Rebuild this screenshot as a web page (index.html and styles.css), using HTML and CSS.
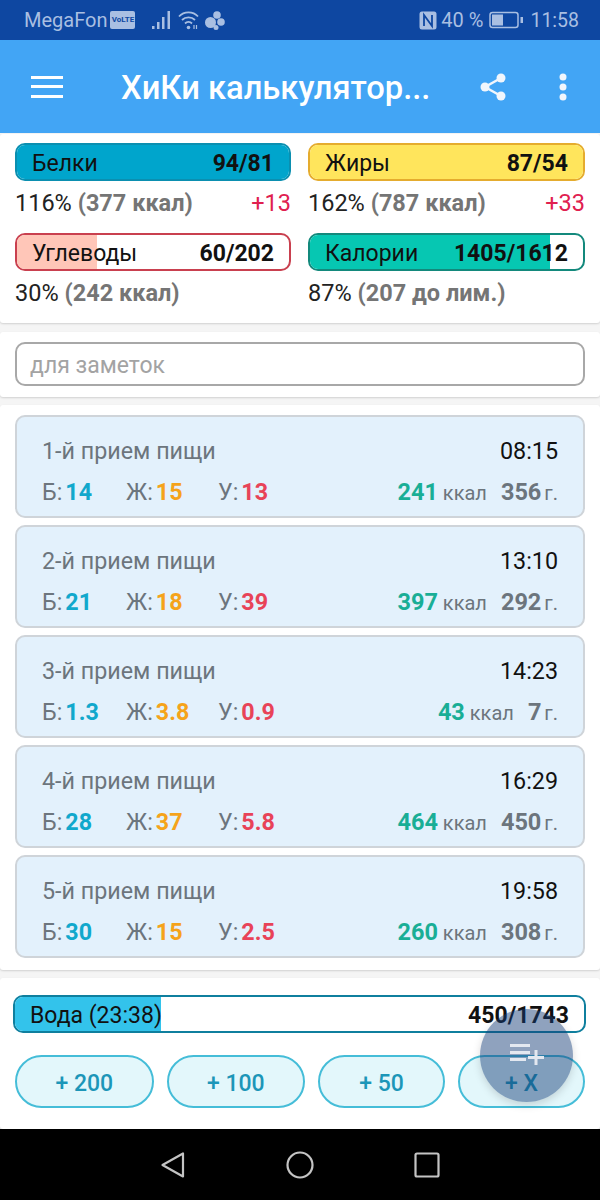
FILE: index.html
```html
<!DOCTYPE html>
<html>
<head>
  <title>ХиКи калькулятор</title>
  <link rel="stylesheet" href="styles.css">
</head>
<body>
<div class="phone">

  <div class="status-bar">
    <div class="status-left">
      <span>MegaFon</span>
      <span class="volte">VoLTE</span>
      <svg class="signal" width="20" height="20" viewBox="0 0 20 20"><g fill="#a9bfe2"><rect x="0" y="16" width="2.500" height="3"/><rect x="5" y="12" width="2.500" height="7"/><rect x="10" y="7" width="2.500" height="12"/><rect x="15.500" y="1" width="2.500" height="18"/></g></svg>
      <svg class="wifi" width="21" height="20" viewBox="0 0 21 20"><g fill="none" stroke="#a9bfe2" stroke-width="1.800"><path d="M1 6.500c5-5.500 14-5.500 19 0"/><path d="M4 10c3.500-3.500 9.500-3.500 13 0"/><path d="M7 13.500c2-2 5-2 7 0"/></g><circle cx="10.500" cy="17.500" r="1.800" fill="#a9bfe2"/><path d="M16 15v4M18.500 15v4" stroke="#a9bfe2" stroke-width="1.200"/></svg>
      <svg class="dots" width="20" height="19" viewBox="0 0 20 19"><g fill="#a9bfe2"><circle cx="5.500" cy="11.500" r="5.500"/><circle cx="12" cy="4" r="3.800"/><circle cx="16" cy="11" r="3.800"/><circle cx="11" cy="16.500" r="2.500"/></g></svg>
    </div>
    <div class="status-right">
      <svg width="18" height="19" viewBox="0 0 18 19"><rect x="0.500" y="0.500" width="17" height="18" rx="2.500" fill="#a9bfe2"/><path d="M5 15V4l8 11V4" fill="none" stroke="#0e47a1" stroke-width="1.800"/></svg>
      <span class="battery-text">40 %</span>
      <svg width="34" height="18" viewBox="0 0 34 18"><rect x="1" y="1.500" width="28" height="15" rx="2.500" fill="none" stroke="#a9bfe2" stroke-width="1.500"/><rect x="3" y="3.500" width="11" height="11" fill="#a9bfe2"/><rect x="31.500" y="6" width="2.500" height="6" fill="#a9bfe2"/></svg>
      <span class="clock">11:58</span>
    </div>
  </div>

  <div class="app-bar">
    <svg class="menu-icon" width="32" height="22" viewBox="0 0 32 22"><g fill="#fff"><rect y="0" width="32" height="3"/><rect y="9" width="32" height="3"/><rect y="19" width="32" height="3"/></g></svg>
    <div class="app-title">ХиКи калькулятор...</div>
    <svg class="share-icon" width="26" height="28" viewBox="0 0 26 28"><path d="M21 5 5 14l16 9" fill="none" stroke="#f1f6fc" stroke-width="2.500"/><g fill="#f1f6fc"><circle cx="21" cy="5" r="4.500"/><circle cx="5" cy="14" r="4.500"/><circle cx="21" cy="23" r="4.500"/></g></svg>
    <svg class="more-icon" width="8" height="28" viewBox="0 0 8 28"><g fill="#f1f6fc"><circle cx="4" cy="4" r="3.500"/><circle cx="4" cy="14" r="3.500"/><circle cx="4" cy="24" r="3.500"/></g></svg>
  </div>

  <div class="card summary">
    <div class="summary-item">
      <div class="bar bar-protein"><span class="bar-fill" style="width:100%"></span><span class="bar-name">Белки</span><b>94/81</b></div>
      <div class="bar-info"><span>116% <b>(377 ккал)</b></span><span class="over">+13</span></div>
    </div>
    <div class="summary-item">
      <div class="bar bar-fat"><span class="bar-fill" style="width:100%"></span><span class="bar-name">Жиры</span><b>87/54</b></div>
      <div class="bar-info"><span>162% <b>(787 ккал)</b></span><span class="over">+33</span></div>
    </div>
    <div class="summary-item">
      <div class="bar bar-carbs"><span class="bar-fill" style="width:29.500%"></span><span class="bar-name">Углеводы</span><b>60/202</b></div>
      <div class="bar-info"><span>30% <b>(242 ккал)</b></span></div>
    </div>
    <div class="summary-item">
      <div class="bar bar-cal"><span class="bar-fill" style="width:88%"></span><span class="bar-name">Калории</span><b>1405/1612</b></div>
      <div class="bar-info"><span>87% <b>(207 до лим.)</b></span></div>
    </div>
  </div>

  <div class="card note-card">
    <div class="note-input">для заметок</div>
  </div>

  <div class="card meals">
    <div class="meal">
      <div class="meal-top"><span>1-й прием пищи</span><span class="meal-time">08:15</span></div>
      <div class="meal-bottom">
        <span class="macro">Б:<b class="c-protein">14</b></span><span class="macro">Ж:<b class="c-fat">15</b></span><span class="macro">У:<b class="c-carbs">13</b></span>
        <span class="meal-kcal"><b>241</b> ккал</span><span class="meal-weight"><b>356</b> г.</span>
      </div>
    </div>
    <div class="meal">
      <div class="meal-top"><span>2-й прием пищи</span><span class="meal-time">13:10</span></div>
      <div class="meal-bottom">
        <span class="macro">Б:<b class="c-protein">21</b></span><span class="macro">Ж:<b class="c-fat">18</b></span><span class="macro">У:<b class="c-carbs">39</b></span>
        <span class="meal-kcal"><b>397</b> ккал</span><span class="meal-weight"><b>292</b> г.</span>
      </div>
    </div>
    <div class="meal">
      <div class="meal-top"><span>3-й прием пищи</span><span class="meal-time">14:23</span></div>
      <div class="meal-bottom">
        <span class="macro">Б:<b class="c-protein">1.3</b></span><span class="macro">Ж:<b class="c-fat">3.8</b></span><span class="macro">У:<b class="c-carbs">0.9</b></span>
        <span class="meal-kcal"><b>43</b> ккал</span><span class="meal-weight"><b>7</b> г.</span>
      </div>
    </div>
    <div class="meal">
      <div class="meal-top"><span>4-й прием пищи</span><span class="meal-time">16:29</span></div>
      <div class="meal-bottom">
        <span class="macro">Б:<b class="c-protein">28</b></span><span class="macro">Ж:<b class="c-fat">37</b></span><span class="macro">У:<b class="c-carbs">5.8</b></span>
        <span class="meal-kcal"><b>464</b> ккал</span><span class="meal-weight"><b>450</b> г.</span>
      </div>
    </div>
    <div class="meal">
      <div class="meal-top"><span>5-й прием пищи</span><span class="meal-time">19:58</span></div>
      <div class="meal-bottom">
        <span class="macro">Б:<b class="c-protein">30</b></span><span class="macro">Ж:<b class="c-fat">15</b></span><span class="macro">У:<b class="c-carbs">2.5</b></span>
        <span class="meal-kcal"><b>260</b> ккал</span><span class="meal-weight"><b>308</b> г.</span>
      </div>
    </div>
  </div>

  <div class="card water">
    <div class="bar bar-water"><span class="bar-fill" style="width:25.600%"></span><span class="bar-name">Вода (23:38)</span><b>450/1743</b></div>
    <div class="water-buttons">
      <div class="water-btn btn-wide">+ 200</div>
      <div class="water-btn btn-wide">+ 100</div>
      <div class="water-btn">+ 50</div>
      <div class="water-btn">+ X</div>
    </div>
    <div class="fab">
      <svg width="36" height="26" viewBox="0 0 36 26"><g fill="#e3e8f0"><rect x="1" y="1" width="20" height="3"/><rect x="1" y="8" width="20" height="3"/><rect x="1" y="15" width="16" height="3"/><rect x="19" y="13" width="16" height="3"/><rect x="25.500" y="7" width="3" height="15"/></g></svg>
    </div>
  </div>

  <div class="nav-bar">
    <svg width="26" height="28" viewBox="0 0 26 28"><path d="M23 2.500v23L2.500 14z" fill="none" stroke="#c4c4c4" stroke-width="2.200" stroke-linejoin="round"/></svg>
    <svg width="28" height="28" viewBox="0 0 28 28"><circle cx="14" cy="14" r="12.500" fill="none" stroke="#c4c4c4" stroke-width="2.200"/></svg>
    <svg width="26" height="26" viewBox="0 0 26 26"><rect x="1.500" y="1.500" width="23" height="23" rx="1.500" fill="none" stroke="#c4c4c4" stroke-width="2.200"/></svg>
  </div>

</div>
</body>
</html>
```

FILE: styles.css
```css
body {
  font-family: Roboto, "Noto Sans", sans-serif;
  margin: 0;
  background: #f5f5f5;
}
.phone {
  position: relative;
  width: 600px;
  height: 1200px;
  display: flex;
  flex-direction: column;
  overflow: hidden;
}

/* status bar */
.status-bar {
  height: 40px;
  flex: none;
  background: #0e47a1;
  color: #a9bfe2;
  font-size: 20px;
  display: flex;
  justify-content: space-between;
  align-items: center;
  padding: 0 21px 0 24px;
}
.status-left, .status-right {
  display: flex;
  align-items: center;
}
.battery-text {
  font-size: 20px;
  margin-left: 4px;
  margin-right: 6px;
}
.clock {
  font-size: 19.500px;
  margin-left: 7px;
}
.volte {
  background: #a9bfe2;
  color: #0e47a1;
  font-size: 8px;
  font-weight: bold;
  width: 25px;
  height: 18px;
  line-height: 18px;
  text-align: center;
  border-radius: 2px;
  margin-left: 3px;
  overflow: hidden;
}
.signal {
  margin-left: 17px;
}
.wifi {
  margin-left: 6px;
}
.dots {
  margin-left: 6px;
}

/* app bar */
.app-bar {
  height: 93px;
  flex: none;
  background: #42a5f5;
  display: flex;
  align-items: center;
  padding-left: 31px;
}
.app-title {
  color: #fff;
  font-size: 32.700px;
  font-weight: 500;
  margin-left: 58px;
  width: 359px;
  white-space: nowrap;
  padding-top: 2px;
}
.more-icon {
  margin-left: 53px;
}

/* cards */
.card {
  background: #fff;
  box-shadow: 0 1px 2px rgba(0, 0, 0, 0.15);
  border-radius: 3px;
  flex: none;
}
.summary {
  margin-top: 1px;
  height: 189px;
  box-sizing: border-box;
  padding: 9px 15px 0;
  display: grid;
  grid-template-columns: 276px 277px;
  column-gap: 17px;
  grid-template-rows: 90px 90px;
}
.bar {
  position: relative;
  height: 38px;
  box-sizing: border-box;
  border: 2px solid;
  border-radius: 10px;
  overflow: hidden;
  display: flex;
  justify-content: space-between;
  align-items: center;
  padding: 2px 15px 0;
  font-size: 23px;
  color: #111;
  background: #fff;
}
.bar-fill {
  position: absolute;
  left: 0;
  top: 0;
  bottom: 0;
}
.bar-name, .bar b {
  position: relative;
}
.bar b {
  font-weight: bold;
}
.bar-protein {
  border-color: #0b8fb0;
}
.bar-protein .bar-fill {
  background: #00a5cc;
}
.bar-fat {
  border-color: #e5ac2e;
}
.bar-fat .bar-fill {
  background: #ffe55c;
}
.bar-carbs {
  border-color: #c9404f;
}
.bar-carbs .bar-fill {
  background: #ffc6b8;
}
.bar-cal {
  border-color: #13897c;
}
.bar-cal .bar-fill {
  background: #06c7b2;
}
.bar-info {
  display: flex;
  justify-content: space-between;
  font-size: 23.500px;
  color: #222;
  margin-top: 8px;
}
.bar-info b {
  color: #757575;
  font-weight: bold;
}
.over {
  color: #e0204f;
}

/* note */
.note-card {
  margin-top: 9px;
  height: 65px;
  box-sizing: border-box;
  padding: 10px 15px 0;
}
.note-input {
  height: 44px;
  box-sizing: border-box;
  border: 2px solid #a8a8a8;
  border-radius: 10px;
  color: #a3a3a3;
  font-size: 23px;
  line-height: 44px;
  padding-left: 13px;
}

/* meals */
.meals {
  margin-top: 8px;
  height: 565px;
  box-sizing: border-box;
  padding: 10px 15px 0;
  display: flex;
  flex-direction: column;
  gap: 7px;
}
.meal {
  height: 103px;
  box-sizing: border-box;
  background: #e3f1fc;
  border: 2px solid #cfd4d9;
  border-radius: 10px;
  padding: 0 25px;
  color: #6c757d;
}
.meal-top {
  display: flex;
  justify-content: space-between;
  align-items: center;
  font-size: 23.300px;
  margin-top: 19px;
  height: 30px;
}
.meal-time {
  color: #111;
}
.meal-bottom {
  display: flex;
  align-items: center;
  font-size: 23.300px;
  margin-top: 11px;
  height: 30px;
}
.macro {
  width: 84px;
}
.macro:nth-child(2) {
  width: 92px;
}
.macro:nth-child(3) {
  margin-right: auto;
}
.macro b {
  margin-left: 3px;
}
.c-protein {
  color: #11a8cc;
}
.c-fat {
  color: #f5a31a;
}
.c-carbs {
  color: #e84358;
}
.meal-kcal {
  font-size: 20px;
  margin-right: 14px;
}
.meal-kcal b {
  font-size: 23.500px;
  color: #19ae96;
}
.meal-weight {
  font-size: 20px;
  word-spacing: -2px;
}
.meal-weight b {
  font-size: 23.500px;
}

/* water */
.water {
  position: relative;
  margin-top: 8px;
  height: 151px;
  box-sizing: border-box;
  padding: 17px 14px 0 13px;
}
.bar-water {
  border-color: #0f7f9e;
  height: 38px;
  padding-top: 3px;
}
.bar-water .bar-fill {
  background: #33c3eb;
}
.water-buttons {
  display: flex;
  gap: 13px;
  margin: 22px 1px 0 2px;
}
.water-btn {
  width: 127px;
  height: 53px;
  box-sizing: border-box;
  border: 2px solid #45bdd8;
  border-radius: 27px;
  background: #e3f7fb;
  color: #1c96b8;
  font-size: 23px;
  font-weight: 500;
  line-height: 53px;
  text-align: center;
}
.btn-wide {
  width: 138.500px;
}
.fab {
  position: absolute;
  left: 480px;
  top: 31px;
  width: 93px;
  height: 93px;
  border-radius: 50%;
  background: rgba(20, 60, 120, 0.48);
  box-shadow: 0 3px 8px rgba(0, 0, 0, 0.15);
  display: flex;
  align-items: center;
  justify-content: center;
}

/* nav bar */
.nav-bar {
  position: absolute;
  left: 0;
  right: 0;
  bottom: 0;
  height: 71px;
  background: #000;
  display: flex;
  justify-content: center;
  align-items: center;
  gap: 100px;
}
```
